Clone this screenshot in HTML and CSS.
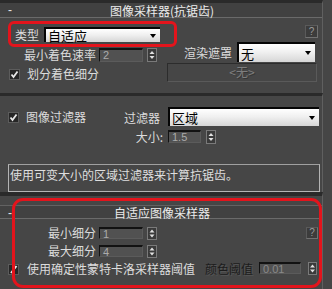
FILE: index.html
```html
<!DOCTYPE html>
<html lang="zh-CN">
<head>
<meta charset="utf-8">
<title>图像采样器</title>
<link rel="stylesheet" href="styles.css">
</head>
<body>
<div class="app">
  <section class="rollout r1">
    <div class="rhead"><span class="minus">-</span><span class="rtitle">图像采样器(抗锯齿)</span><span></span></div>
    <div class="row rowA">
      <span class="lbl lbl-type">类型</span>
      <div class="dd dd-type"><span class="dd-text">自适应</span><span class="tri"></span></div>
      <span class="help help1">?</span>
    </div>
    <div class="row rowB">
      <span class="lbl lbl-r">最小着色速率</span>
      <div class="spin spin-a"><span>2</span></div>
      <svg class="arrows" width="10" height="14" viewBox="0 0 10 14"><rect x="0.5" y="0.5" width="9" height="13" fill="#3a3a3a" stroke="#7a7a7a"/><path d="M2.5 6 L5 3 L7.5 6Z" fill="#e0e0e0"/><path d="M2.5 8 L5 11 L7.5 8Z" fill="#e0e0e0"/></svg>
      <span class="lbl lbl-mask">渲染遮罩</span>
      <div class="dd dd-mask"><span class="dd-text">无</span><span class="tri"></span></div>
    </div>
    <div class="row rowC">
      <svg class="chk" width="11" height="11" viewBox="0 0 11 11"><rect x="0.5" y="0.5" width="10" height="10" fill="#262626" stroke="#5c5c5c"/><path d="M2.5 5.5 L4.5 8 L8.5 2.5" fill="none" stroke="#e8e8e8" stroke-width="1.8"/></svg>
      <span class="lbl chk-lbl">划分着色细分</span>
      <div class="btn-none">&lt;无&gt;</div>
    </div>
  </section>

  <section class="rollout r2">
    <div class="row rowD">
      <svg class="chk" width="11" height="11" viewBox="0 0 11 11"><rect x="0.5" y="0.5" width="10" height="10" fill="#262626" stroke="#5c5c5c"/><path d="M2.5 5.5 L4.5 8 L8.5 2.5" fill="none" stroke="#e8e8e8" stroke-width="1.8"/></svg>
      <span class="lbl chk-lbl">图像过滤器</span>
      <span class="lbl lbl-filter">过滤器</span>
      <div class="dd dd-filter"><span class="dd-text">区域</span><span class="tri"></span></div>
    </div>
    <div class="row rowE">
      <span class="lbl lbl-size">大小:</span>
      <div class="spin spin-b"><span>1.5</span></div>
      <svg class="arrows" width="10" height="14" viewBox="0 0 10 14"><rect x="0.5" y="0.5" width="9" height="13" fill="#3a3a3a" stroke="#7a7a7a"/><path d="M2.5 6 L5 3 L7.5 6Z" fill="#e0e0e0"/><path d="M2.5 8 L5 11 L7.5 8Z" fill="#e0e0e0"/></svg>
    </div>
    <div class="desc">使用可变大小的区域过滤器来计算抗锯齿。</div>
  </section>

  <section class="rollout r3">
    <div class="rhead rhead3"><span class="minus">-</span><span class="rtitle">自适应图像采样器</span><span></span></div>
    <div class="row rowF">
      <span class="lbl lbl-r">最小细分</span>
      <div class="spin spin-a"><span>1</span></div>
      <svg class="arrows" width="10" height="13" viewBox="0 0 10 13"><rect x="0.5" y="0.5" width="9" height="12" fill="#3a3a3a" stroke="#7a7a7a"/><path d="M2.5 5.5 L5 2.5 L7.5 5.5Z" fill="#e0e0e0"/><path d="M2.5 7.5 L5 10.5 L7.5 7.5Z" fill="#e0e0e0"/></svg>
      <span class="help help3">?</span>
    </div>
    <div class="row rowG">
      <span class="lbl lbl-r">最大细分</span>
      <div class="spin spin-a"><span>4</span></div>
      <svg class="arrows" width="10" height="13" viewBox="0 0 10 13"><rect x="0.5" y="0.5" width="9" height="12" fill="#3a3a3a" stroke="#7a7a7a"/><path d="M2.5 5.5 L5 2.5 L7.5 5.5Z" fill="#e0e0e0"/><path d="M2.5 7.5 L5 10.5 L7.5 7.5Z" fill="#e0e0e0"/></svg>
    </div>
    <div class="row rowH">
      <svg class="chk" width="11" height="11" viewBox="0 0 11 11"><rect x="0.5" y="0.5" width="10" height="10" fill="#262626" stroke="#5c5c5c"/><path d="M3 9 L8.5 2" fill="none" stroke="#e8e8e8" stroke-width="2"/></svg>
      <span class="lbl chk-lbl3">使用确定性蒙特卡洛采样器阈值</span>
      <span class="lbl lbl-dis">颜色阈值</span>
      <div class="spin spin-c"><span>0.01</span></div>
      <svg class="arrows arrows-end" width="9" height="13" viewBox="0 0 9 13"><rect x="0.5" y="0.5" width="8" height="12" fill="#3a3a3a" stroke="#7a7a7a"/><path d="M2 5.5 L4.5 2.5 L7 5.5Z" fill="#e0e0e0"/><path d="M2 7.5 L4.5 10.5 L7 7.5Z" fill="#e0e0e0"/></svg>
    </div>
  </section>

  <div class="mark mark1"></div>
  <div class="mark mark2"></div>
</div>
</body>
</html>
```

FILE: styles.css
```css
* { box-sizing: border-box; margin: 0; padding: 0; }
html, body { width: 332px; height: 289px; overflow: hidden; }
body {
  background: #464646;
  font-family: "Noto Sans CJK SC", "Noto Sans", sans-serif;
  font-size: 12px;
  color: #dcdcdc;
}
.app { position: relative; width: 332px; height: 289px; background: #464646; display: flex; flex-direction: column; }

.rollout { width: 323px; background: #464646; border-right: 1px solid #606060; border-top: 3px solid #2a2a2a; }
.r1 { height: 93px; }
.r2 { height: 99px; padding-top: 11px; }
.r3 { height: 97px; border-top-width: 4px; padding-top: 9px; }

.rhead {
  height: 15px;
  display: grid;
  grid-template-columns: 1fr auto 1fr;
  align-items: center;
  background: #414141;
  border-bottom: 1px solid #6a6a6a;
}
.rhead3 { height: 14px; border-top: 1px solid #626262; }
.minus { padding-left: 8px; font-family: "Liberation Sans", sans-serif; font-size: 12px; line-height: 12px; color: #e6e6e6; }
.rtitle { color: #ececec; font-size: 12px; line-height: 13px; padding-left: 2px; }

.row { display: flex; align-items: flex-start; }
.lbl { line-height: 14px; white-space: nowrap; }

.rowA { height: 24px; }
.lbl-type { margin: 10px 0 0 15px; }
.dd-type { margin: 9px 0 0 5px; width: 116px; height: 15px; }
.help {
  margin-left: auto; width: 13px; height: 13px;
  background: #3c3c3c; border: 1px solid #727272; border-top-color: #5a5a5a; border-left-color: #5a5a5a;
  color: #9a9a9a; font-family: "Liberation Sans", sans-serif; font-size: 10px; line-height: 11px; text-align: center;
}
.help1 { margin-top: 7px; margin-right: 4px; }
.help3 { margin-right: 4px; margin-top: 0; width: 12px; height: 12px; line-height: 10px; }

.dd {
  display: flex; align-items: center; justify-content: space-between;
  background: linear-gradient(#ffffff, #f0f0f0 45%, #d6d6d6);
  border-top: 2px solid #050505; border-left: 2px solid #050505;
  color: #000; padding: 0 4px 0 2px; font-size: 13px; line-height: 13px;
}
.tri { width: 0; height: 0; border-left: 3.5px solid transparent; border-right: 3.5px solid transparent; border-top: 4px solid #000; }

.rowB { height: 20px; }
.lbl-r { width: 88px; margin-left: 8px; text-align: right; }
.rowB .lbl-r { margin-top: 6px; }
.spin {
  background: #515151; color: #ababab;
  border-top: 2px solid #121212; border-left: 1px solid #121212;
  border-right: 1px solid #5b5b5b; border-bottom: 1px solid #5b5b5b;
  font-family: "Liberation Sans", sans-serif; font-size: 11px; line-height: 11px;
  padding-left: 3px;
}
.spin-a { width: 44px; height: 14px; margin-left: 3px; }
.rowB .spin-a { margin-top: 6px; }
.arrows { display: block; margin-left: 4px; }
.rowB .arrows { margin-top: 6px; }
.lbl-mask { margin: 4px 0 0 27px; width: 50px; }
.dd-mask { margin-left: 3px; width: 78px; height: 20px; }

.rowC { height: 20px; }
.chk { display: block; }
.rowC .chk { margin: 7px 0 0 9px; }
.chk-lbl { margin: 5px 0 0 7px; }
.btn-none {
  margin: 1px 5px 0 auto; width: 150px; height: 19px;
  border: 1px solid #2c2c2c; border-right-color: #5a5a5a; border-bottom-color: #5a5a5a;
  color: #7e7e7e; text-align: center; font-size: 12px; line-height: 16px;
  text-shadow: 1px 1px 0 #363636;
}

.rowD { height: 19px; }
.rowD .chk { margin: 5px 0 0 8px; }
.rowD .chk-lbl { margin-top: 3px; }
.lbl-filter { margin: 4px 8px 0 auto; }
.dd-filter { width: 151px; height: 19px; margin-right: 3px; }

.rowE { height: 13px; margin-top: 4px; }
.lbl-size { margin: 0 0 0 100px; width: 63px; text-align: right; line-height: 14px; }
.spin-b { width: 33px; height: 13px; margin-left: 5px; }
.rowE .arrows { margin-left: 5px; }

.desc {
  margin: 21px 0 0 8px; width: 312px; height: 28px;
  border: 1px solid #b4b4b4; border-top-color: #a0a0a0;
  color: #dedede; font-size: 12px; line-height: 16px; padding: 2px 0 0 1px; white-space: nowrap; overflow: hidden;
}

.rowF { height: 12px; margin-top: 8px; }
.rowF .spin-a, .rowG .spin-a { height: 12px; border-top-width: 2px; }
.rowF .lbl-r, .rowG .lbl-r { margin-top: -1px; }
.rowG { height: 12px; margin-top: 6px; }
.rowH { height: 13px; margin-top: 5px; }
.rowH .chk { margin: 2px 0 0 8px; }
.chk-lbl3 { margin: 0 0 0 8px; }
.lbl-dis { margin: 0 0 0 auto; color: #1c1c1c; text-shadow: 1px 1px 0 #565656; }
.spin-c { width: 42px; height: 12px; margin-left: 6px; color: #8a8a8a; }
.arrows-end { margin: 0 5px 0 7px; }

.mark { position: absolute; border: 3px solid #e3141c; pointer-events: none; }
.mark1 { left: 8px; top: 21px; width: 169px; height: 26px; border-radius: 6px; }
.mark2 { left: 12px; top: 198px; width: 310px; height: 90px; border-width: 3.5px; border-radius: 11px; }
```
